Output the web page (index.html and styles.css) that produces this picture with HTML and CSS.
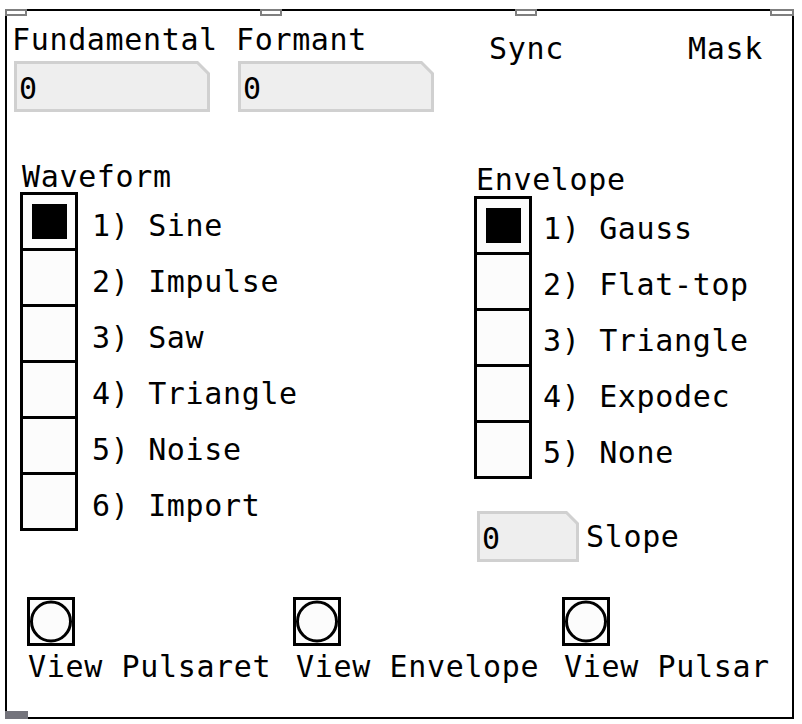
FILE: index.html
```html
<!DOCTYPE html>
<html>
<head>
<meta charset="utf-8">
<link rel="stylesheet" href="styles.css">
</head>
<body>
<div class="panel">
  <div class="inlet in1"></div>
  <div class="inlet in2"></div>
  <div class="inlet in3"></div>
  <div class="inlet in4"></div>
  <div class="outlet"></div>

  <div class="top-row">
    <div class="col-fund">
      <div class="txt">Fundamental</div>
      <div class="numbox wide"><div class="numbox-inner">0</div></div>
    </div>
    <div class="col-form">
      <div class="txt">Formant</div>
      <div class="numbox wide"><div class="numbox-inner">0</div></div>
    </div>
    <div class="col-sync txt">Sync</div>
    <div class="col-mask txt">Mask</div>
  </div>

  <div class="mid-row">
    <div class="wave-group">
      <div class="txt group-label">Waveform</div>
      <div class="options">
        <div class="radio">
          <div class="cell"><div class="dot"></div></div>
          <div class="cell"></div>
          <div class="cell"></div>
          <div class="cell"></div>
          <div class="cell"></div>
          <div class="cell"></div>
        </div>
        <div class="opt-labels wave-labels">
          <div class="txt opt">1) Sine</div>
          <div class="txt opt">2) Impulse</div>
          <div class="txt opt">3) Saw</div>
          <div class="txt opt">4) Triangle</div>
          <div class="txt opt">5) Noise</div>
          <div class="txt opt">6) Import</div>
        </div>
      </div>
    </div>
    <div class="env-group">
      <div class="txt group-label">Envelope</div>
      <div class="options">
        <div class="radio">
          <div class="cell"><div class="dot"></div></div>
          <div class="cell"></div>
          <div class="cell"></div>
          <div class="cell"></div>
          <div class="cell"></div>
        </div>
        <div class="opt-labels env-labels">
          <div class="txt opt">1) Gauss</div>
          <div class="txt opt">2) Flat-top</div>
          <div class="txt opt">3) Triangle</div>
          <div class="txt opt">4) Expodec</div>
          <div class="txt opt">5) None</div>
        </div>
      </div>
      <div class="slope-row">
        <div class="numbox small"><div class="numbox-inner">0</div></div>
        <div class="txt slope-label">Slope</div>
      </div>
    </div>
  </div>

  <div class="bottom-row">
    <div class="bang-group g1">
      <div class="bang"><svg width="42" height="43" viewBox="0 0 42 43"><circle cx="21" cy="21.5" r="19.5" fill="#fcfcfc" stroke="#000" stroke-width="3"/></svg></div>
      <div class="txt bang-label">View Pulsaret</div>
    </div>
    <div class="bang-group g2">
      <div class="bang"><svg width="42" height="43" viewBox="0 0 42 43"><circle cx="21" cy="21.5" r="19.5" fill="#fcfcfc" stroke="#000" stroke-width="3"/></svg></div>
      <div class="txt bang-label">View Envelope</div>
    </div>
    <div class="bang-group g3">
      <div class="bang"><svg width="42" height="43" viewBox="0 0 42 43"><circle cx="21" cy="21.5" r="19.5" fill="#fcfcfc" stroke="#000" stroke-width="3"/></svg></div>
      <div class="txt bang-label">View Pulsar</div>
    </div>
  </div>
</div>
</body>
</html>
```

FILE: styles.css
```css
html, body {
  margin: 0;
  padding: 0;
  background: #ffffff;
}

body {
  font-family: "DejaVu Sans Mono", monospace;
  font-size: 30px;
  letter-spacing: 0.65px;
  color: #000;
}

.panel {
  position: relative;
  margin: 9px 0 0 5px;
  width: 785px;
  height: 706px;
  border: 2px solid #000;
  display: flex;
  flex-direction: column;
}

.txt {
  line-height: 30px;
  white-space: nowrap;
}

/* inlets / outlet sit on top of the border */
.inlet {
  position: absolute;
  top: -2px;
  width: 22px;
  height: 7px;
  box-sizing: border-box;
  border: 2px solid #7f7f7f;
  background: #fff;
}
.in1 { left: -2px; }
.in2 { left: 253px; }
.in3 { left: 508px; }
.in4 { left: 763px; width: 24px; }

.outlet {
  position: absolute;
  left: -2px;
  top: 700px;
  width: 23px;
  height: 8px;
  background: #74747c;
}

/* top row */
.top-row {
  display: flex;
  align-items: flex-start;
  padding-top: 13.5px;
}
.col-fund { margin-left: 5px; width: 224px; }
.col-form { width: 253px; }
.col-sync { width: 199px; margin-top: 9.5px; }
.col-mask { margin-top: 9.5px; }

.numbox {
  box-sizing: border-box;
  height: 51px;
  padding: 3px;
  background: #d0d0d0;
  clip-path: polygon(0 0, calc(100% - 12px) 0, 100% 12px, 100% 100%, 0 100%);
}
.numbox.wide {
  width: 196px;
  margin-left: 2px;
  margin-top: 6.5px;
}
.numbox.small {
  width: 102px;
  margin-left: 3px;
}
.numbox-inner {
  height: 100%;
  box-sizing: border-box;
  background: #eeeeee;
  clip-path: polygon(0 0, calc(100% - 10.2px) 0, 100% 10.2px, 100% 100%, 0 100%);
  padding: 9.5px 0 0 2px;
  line-height: 30px;
}

/* middle */
.mid-row {
  display: flex;
  align-items: flex-start;
  margin-top: 49.5px;
}
.wave-group {
  margin-left: 13px;
  width: 454px;
}
.wave-group .group-label { margin-left: 2px; }

.env-group {
  margin-top: 3px;
}
.env-group .group-label { margin-left: 2px; }
.env-group .options { margin-top: 1px; }

.options {
  display: flex;
  align-items: flex-start;
}

.radio {
  display: flex;
  flex-direction: column;
  width: 58px;
}
.cell {
  box-sizing: border-box;
  height: 59px;
  border: 3px solid #000;
  background: #fcfcfc;
  display: flex;
  align-items: center;
  justify-content: center;
}
.cell + .cell { margin-top: -3px; }
.dot {
  width: 35px;
  height: 35px;
  background: #000;
}

.opt-labels {
  display: flex;
  flex-direction: column;
  gap: 26px;
}
.wave-labels { margin-left: 14px; padding-top: 19.5px; }
.env-labels { margin-left: 11px; padding-top: 18.5px; }

.slope-row {
  display: flex;
  align-items: flex-start;
  margin-top: 32.5px;
}
.slope-label {
  margin-left: 7px;
  padding-top: 10.5px;
}

/* bottom */
.bottom-row {
  display: flex;
  align-items: flex-start;
  margin-top: 35px;
}
.bang-group { display: flex; flex-direction: column; }
.g1 { margin-left: 20px; width: 266px; }
.g2 { width: 269px; }
.bang {
  box-sizing: border-box;
  width: 48px;
  height: 49px;
  border: 3px solid #000;
  background: #fcfcfc;
  display: flex;
}
.bang svg { display: block; }
.bang-label {
  margin-top: 6px;
}
.g1 .bang-label { margin-left: 1px; }
.g2 .bang-label { margin-left: 3px; }
.g3 .bang-label { margin-left: 2px; }
```
